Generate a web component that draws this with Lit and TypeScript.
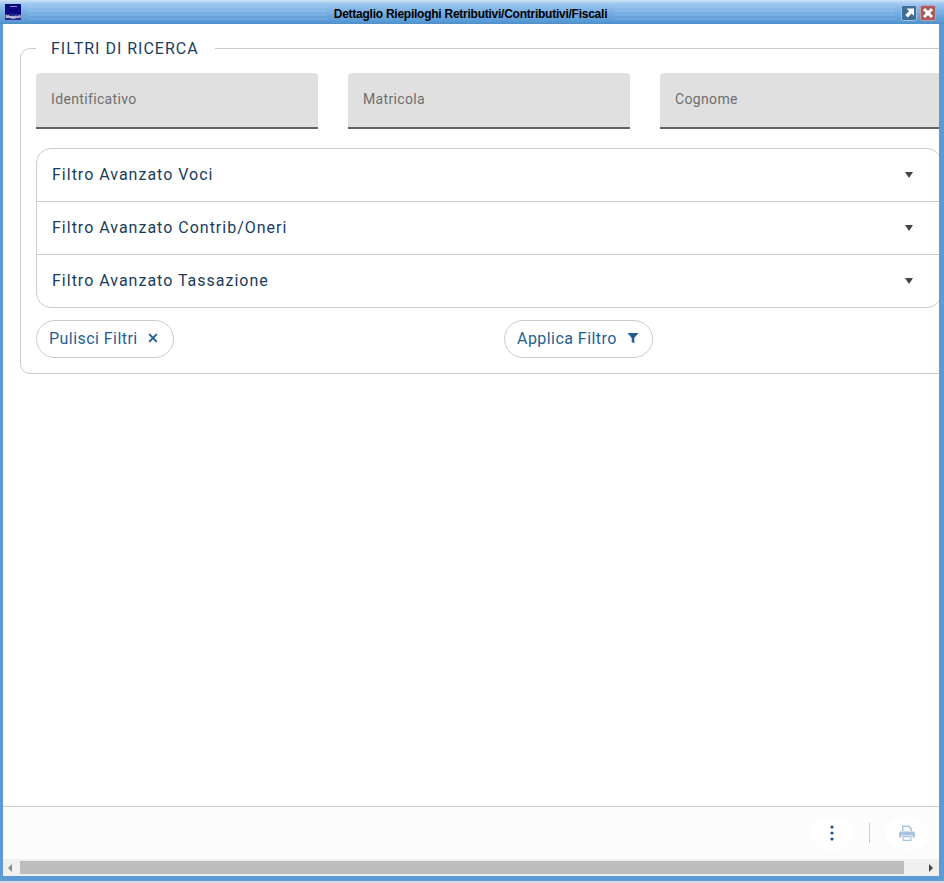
import { LitElement, html, css } from "lit";
import { customElement } from "lit/decorators.js";

@customElement("app-root")
export class AppRoot extends LitElement {
  static styles = css`
    :host { display: block; width: 944px; height: 883px; background: #d9d9d9; font-family: Roboto, sans-serif; }
    * { box-sizing: border-box; }
    .window { height: 881px; display: flex; flex-direction: column; background: #5b9bd5; padding: 0 5px 5px 3px; overflow: hidden; }
    .titlebar {
      height: 24px; margin: 0 -5px 0 -3px; flex: none; display: flex; align-items: center; padding: 0 8px 0 5px;
      background: linear-gradient(#cfe2f5 0, #b4d4f2 2px, #9cc7f0 4px, #86b8e8 9px, #6fa8df 15px, #5b9bd5 21px, #4f8fc9 24px);
    }
    .logo { position: relative; flex: none; width: 16px; height: 16px; background: #0a0a80; overflow: hidden; }
    .logo::before { content: ""; position: absolute; left: 5px; top: 2px; width: 7px; height: 1px; background: #8d8dc0; }
    .logo span { position: absolute; left: 0; right: 0; bottom: 0; height: 6px; font: bold 4px/6px "Liberation Sans", sans-serif; letter-spacing: -0.15px; color: #fff; text-align: center; background: #2a2a8a; }
    .stripes { height: 14px; margin-top: 2px; background: repeating-linear-gradient(rgba(255,255,255,0.08) 0 2px, rgba(255,255,255,0) 2px 4px); }
    .stripes.a { flex: none; width: 299px; margin-left: 7px; }
    .stripes.b { flex: 1; }
    .title { flex: none; width: 287px; text-align: center; font: bold 12px/24px "Liberation Sans", sans-serif; letter-spacing: -0.25px; color: #000; padding-top: 4px; line-height: 20px; }
    .controls { flex: none; display: flex; gap: 3px; margin-left: 6px; margin-top: 2px; }
    .ctl { width: 16px; height: 16px; display: block; }
    .body { flex: 1; min-height: 0; background: #fff; overflow: hidden; padding: 15px 0 0 17px; }
    fieldset { width: 938px; margin: 0; border: 1px solid #ccc; border-radius: 10px; padding: 15px 15px 15px; height: 335px; }
    legend { padding: 0 16px 0 15px; font-size: 16px; line-height: 19px; letter-spacing: 1px; color: #1a3c5c; text-transform: uppercase; height: 19px; }
    .inputs { display: grid; grid-template-columns: repeat(3, 282px); gap: 30px; }
    .input { height: 56px; background: #e0e0e0; border-bottom: 2px solid #5f6368; border-radius: 4px 4px 0 0; padding: 0 15px; font-size: 14px; line-height: 52px; color: #6e6e6e; letter-spacing: 0.35px; }
    .accordion { margin-top: 19px; width: 906px; height: 160px; border: 1px solid #ccc; border-radius: 15px; }
    .row { height: 53px; display: flex; align-items: center; justify-content: space-between; padding: 0 28px 0 15px; font-size: 16px; letter-spacing: 1px; color: #1a3c5c; border-bottom: 1px solid #ccc; }
    .row:last-child { border-bottom: 0; height: 52px; }
    .row .label { position: relative; top: -1px; }
    .caret { width: 0; height: 0; border-left: 4px solid transparent; border-right: 4px solid transparent; border-top: 6px solid #444; }
    .actions { margin-top: 12px; display: grid; grid-template-columns: 1fr 1fr; }
    .actions > div + div { padding-left: 15px; }
    .btn { display: inline-flex; align-items: center; height: 38px; padding: 0 15px 2px 12px; gap: 10px; border: 1px solid #ccc; border-radius: 19px; font-size: 16px; letter-spacing: 0.45px; color: #1f5f96; background: #fff; }
    .btn.apply { padding-right: 13px; }
    .btn svg { display: block; }
    .footer { flex: none; height: 53px; background: #fcfcfc; border-top: 1px solid #ccc; display: flex; align-items: center; justify-content: flex-end; padding-right: 10px; }
    .circle { width: 44px; height: 33px; border-radius: 50%; background: #fff; display: flex; align-items: center; justify-content: center; }
    .sep { width: 1px; height: 20px; background: #ccc; margin: 0 15px; }
    .hbar { flex: none; height: 17px; background: #f0f0f0; display: flex; align-items: center; padding: 0 6px 0 5px; }
    .thumb { height: 13px; width: 884px; background: #bdbdbd; margin: 0 auto 0 8px; flex: none; }
    .arrow { width: 0; height: 0; border-top: 4px solid transparent; border-bottom: 4px solid transparent; flex: none; }
    .arrow.l { border-right: 4px solid #8a8a8a; }
    .arrow.r { border-left: 4px solid #444; }
  `;

  render() {
    return html`
      <div class="window">
        <div class="titlebar">
          <div class="logo"><span>Maggioli</span></div>
          <div class="stripes a"></div>
          <div class="title">Dettaglio Riepiloghi Retributivi/Contributivi/Fiscali</div>
          <div class="stripes b"></div>
          <div class="controls">
            <svg class="ctl" viewBox="0 0 16 16">
              <rect x="0.5" y="0.5" width="15" height="15" rx="2" fill="#3f6d98" stroke="#a9c3dc"/>
              <path d="M5.5 3.5h7.5v7.5l-2.4-2.4-3.8 3.8-2.5-2.5 3.8-3.8z" fill="#fff"/>
            </svg>
            <svg class="ctl" viewBox="0 0 16 16">
              <rect x="0.5" y="0.5" width="15" height="15" rx="2" fill="#a85a5e" stroke="#c9a0a8"/>
              <path d="M4 4l8 8M12 4l-8 8" stroke="#fff" stroke-width="3"/>
            </svg>
          </div>
        </div>
        <div class="body">
          <fieldset>
            <legend>Filtri di ricerca</legend>
            <div class="inputs">
              <div class="input">Identificativo</div>
              <div class="input">Matricola</div>
              <div class="input">Cognome</div>
            </div>
            <div class="accordion">
              <div class="row"><span class="label">Filtro Avanzato Voci</span><span class="caret"></span></div>
              <div class="row"><span class="label">Filtro Avanzato Contrib/Oneri</span><span class="caret"></span></div>
              <div class="row"><span class="label">Filtro Avanzato Tassazione</span><span class="caret"></span></div>
            </div>
            <div class="actions">
              <div><span class="btn">Pulisci Filtri
                <svg width="10" height="10" viewBox="0 0 10 10"><path d="M1.2 1.2l7.6 7.6M8.8 1.2l-7.6 7.6" stroke="#1f5f96" stroke-width="1.9"/></svg>
              </span></div>
              <div><span class="btn apply">Applica Filtro
                <svg width="12" height="12" viewBox="0 0 12 12"><path d="M0.5 1h11L7.3 6v5.5L4.7 10V6z" fill="#1f5f96"/></svg>
              </span></div>
            </div>
          </fieldset>
        </div>
        <div class="footer">
          <div class="circle">
            <svg width="4" height="16" viewBox="0 0 4 16"><circle cx="2" cy="2" r="1.6" fill="#1f4f86"/><circle cx="2" cy="8" r="1.6" fill="#1f4f86"/><circle cx="2" cy="14" r="1.6" fill="#1f4f86"/></svg>
          </div>
          <div class="sep"></div>
          <div class="circle">
            <svg width="16" height="16" viewBox="0 0 16 16" fill="#a9c4de"><path d="M3 0.5h7l3 3V6h-1.5V4L9.5 2H4.5v4H3z"/><path d="M1.5 6.5h13A1.5 1.5 0 0 1 16 8v4.5h-2.5v-2h-11v2H0V8a1.5 1.5 0 0 1 1.5-1.5z"/><path d="M3.5 11h9v5h-9zM4.7 12.2v2.6h6.6v-2.6z"/></svg>
          </div>
        </div>
        <div class="hbar"><span class="arrow l"></span><div class="thumb"></div><span class="arrow r"></span></div>
      </div>
    `;
  }
}
